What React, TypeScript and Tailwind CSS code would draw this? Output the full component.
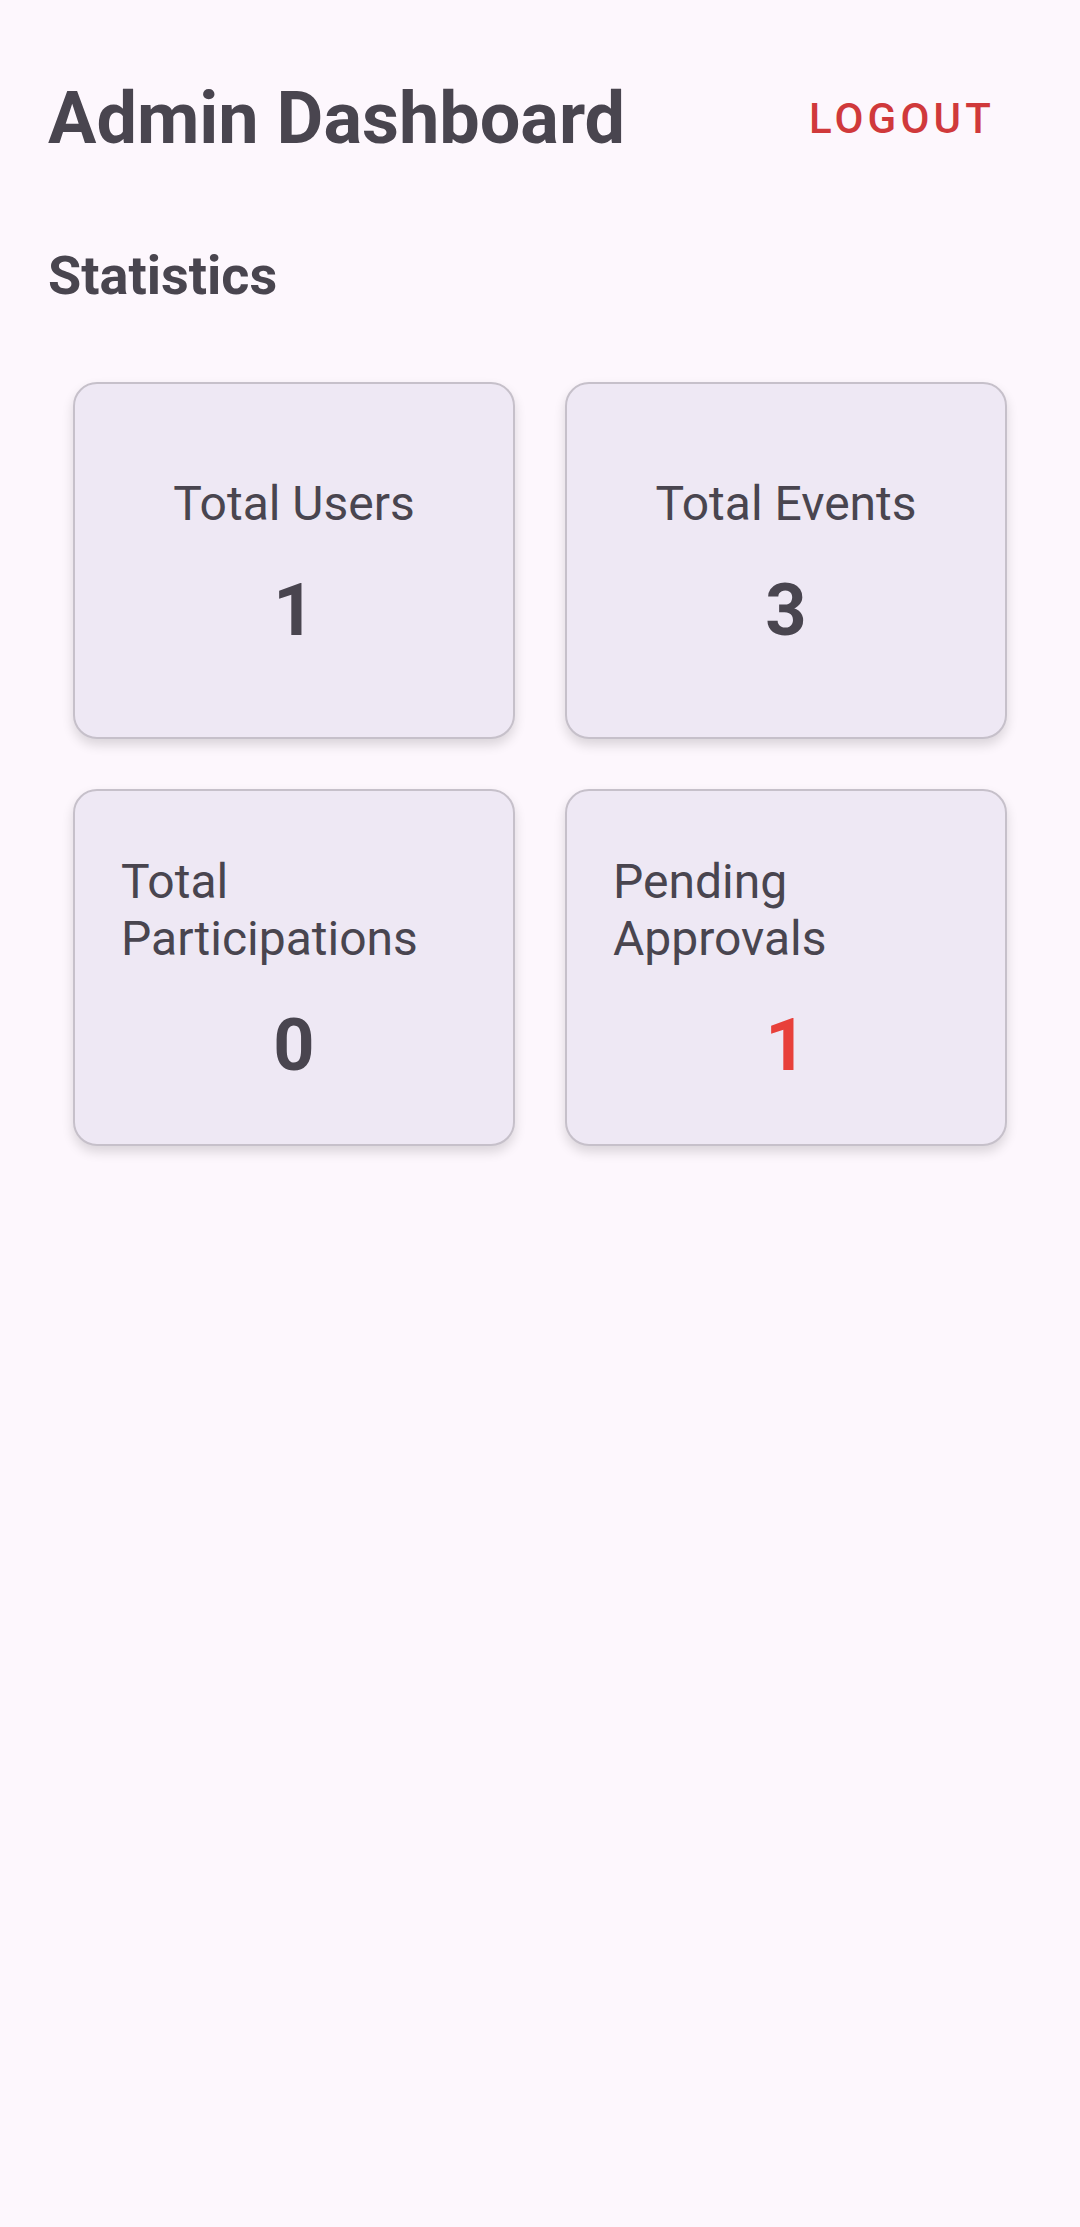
import React from "react";

const font = { fontFamily: "Roboto, 'Noto Sans', sans-serif" };

function StatCard({ label, value, red }: { label: string; value: string; red?: boolean }) {
  return (
    <div className="m-[25px] h-[357px] rounded-[24px] border-2 border-[#c6c0ca] bg-[#eee8f4] shadow-[0_6px_12px_rgba(0,0,0,0.14)] px-[46px] pt-[6px] flex flex-col items-center justify-center gap-[37px]">
      <div className="text-[48px] leading-[57px] text-[#49454f] text-left">{label}</div>
      <div className={`text-[72px] leading-[84px] font-bold ${red ? "text-[#e8403a]" : "text-[#49454f]"}`}>{value}</div>
    </div>
  );
}

export default function App() {
  return (
    <div className="min-h-[2227px] w-[1080px] bg-[#fdf7fd] px-[48px] pt-[77px]" style={font}>
      <div className="flex items-center justify-between h-[84px]">
        <h1 className="text-[72px] leading-[84px] font-bold text-[#49454f]">Admin Dashboard</h1>
        <button className="mr-[37px] text-[42px] leading-[50px] font-medium tracking-[0.1em] text-[#d0393b]">LOGOUT</button>
      </div>
      <h2 className="mt-[83px] text-[54px] leading-[63px] font-bold text-[#49454f]">Statistics</h2>
      <div className="mt-[50px] grid grid-cols-2">
        <StatCard label="Total Users" value="1" />
        <StatCard label="Total Events" value="3" />
        <StatCard label="Total Participations" value="0" />
        <StatCard label="Pending Approvals" value="1" red />
      </div>
    </div>
  );
}
